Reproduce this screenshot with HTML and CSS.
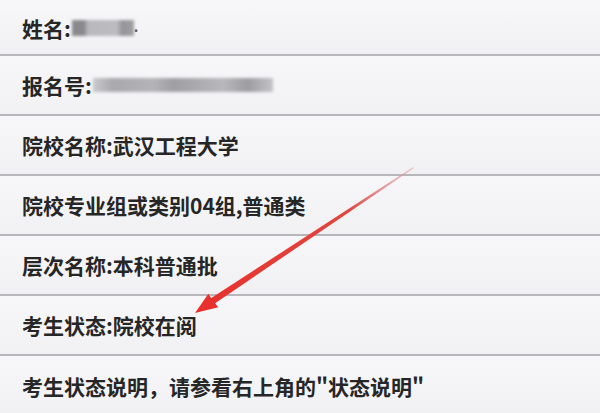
FILE: index.html
```html
<!DOCTYPE html>
<html lang="zh-CN">
<head>
  <meta charset="UTF-8" />
  <meta name="viewport" content="width=device-width, initial-scale=1.0">
  <title>考生状态</title>
  <link rel="stylesheet" href="styles.css">
</head>
<body>
  <div class="list">
    <div class="row first">姓名:<span class="mask mask-name"></span><span class="dot">.</span></div>
    <div class="row">报名号:<span class="mask mask-num"></span></div>
    <div class="row">院校名称:武汉工程大学</div>
    <div class="row">院校专业组或类别04组,普通类</div>
    <div class="row">层次名称:本科普通批</div>
    <div class="row">考生状态:院校在阅</div>
    <div class="row last">考生状态说明，请参看右上角的"状态说明"</div>
  </div>

  <!-- red arrow drawn over the list -->
  <svg class="arrow" width="600" height="413" viewBox="0 0 600 413">
    <defs>
      <linearGradient id="fade" x1="413" y1="167" x2="200" y2="310" gradientUnits="userSpaceOnUse">
        <stop offset="0" stop-color="#d9a0a8" stop-opacity="0.5" />
        <stop offset="0.3" stop-color="#e0473f" />
        <stop offset="1" stop-color="#e8312d" />
      </linearGradient>
    </defs>
    <polygon points="413,167 413.8,168.3 214,304 210.5,298.5" fill="url(#fade)" />
    <polygon points="195,313 208.4,293.8 212,299.5 218.3,307.2" fill="#e8312d" />
  </svg>
</body>
</html>
```

FILE: styles.css
```css
* {
  box-sizing: border-box;
}
body {
  margin: 0;
  width: 600px;
  height: 413px;
  overflow: hidden;
  background: #f4f4f6;
  font-family: "Noto Sans CJK SC", "Noto Sans", sans-serif;
  color: #262626;
  position: relative;
}
.list {
  display: flex;
  flex-direction: column;
}
.row {
  height: 60px;
  display: flex;
  align-items: center;
  padding-left: 22px;
  font-size: 21px;
  font-weight: 700;
  background: linear-gradient(to bottom, #f7f7f9, #f1f1f3);
  border-bottom: 2px solid #b6b6bb;
}
.row.first {
  height: 56px;
  padding-top: 2px;
}
.row.last {
  border-bottom: none;
}
.mask {
  display: inline-block;
  height: 16px;
  filter: blur(1.5px);
  margin-left: 1px;
}
.mask-name {
  width: 62px;
  background: linear-gradient(to right, #8a8a8e 0, #8a8a8e 12px, #b9b9bd 16px, #bcbcc0 45px, #959599 50px, #a0a0a4 62px);
}
.mask-num {
  width: 180px;
  height: 14px;
  background: linear-gradient(to right, #c9c9cd 0, #a9a9ad 20px, #b4b4b8 60px, #9f9fa3 80px, #b8b8bc 130px, #9d9da1 155px, #c4c4c8 180px);
}
.dot {
  font-size: 14px;
  align-self: flex-end;
  margin-bottom: 18px;
  color: #555;
}
.arrow {
  position: absolute;
  left: 0;
  top: 0;
}
```
